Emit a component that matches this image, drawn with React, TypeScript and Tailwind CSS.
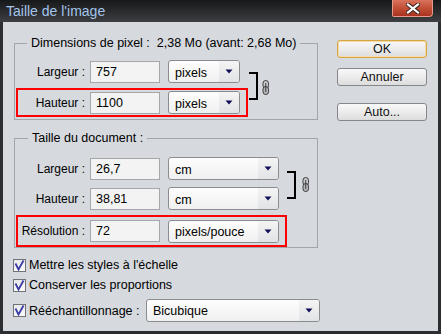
import React from "react";

function Arrow() {
  return (
    <svg width="8" height="5" viewBox="0 0 8 5">
      <path d="M0.5 0.5 H7.5 L4 4.5 Z" fill="#10105a" />
    </svg>
  );
}

function Select({ w, label }: { w: string; label: string }) {
  return (
    <div
      className={`${w} h-[23px] ml-[8px] flex items-stretch rounded-[3px] border border-[#8a8c8f] bg-gradient-to-b from-[#fdfdfd] to-[#f0f0f0] overflow-hidden`}
    >
      <div className="flex-1 flex items-center pl-[6px] text-[12.5px] leading-[16px] pt-[2px]">{label}</div>
      <div className="w-[20px] flex items-center justify-center bg-gradient-to-b from-[#f4f4f4] to-[#e2e3e5]">
        <Arrow />
      </div>
    </div>
  );
}

function Input({ value }: { value: string }) {
  return (
    <div className="w-[70px] h-[22px] ml-[5px] border border-[#a4a6a9] bg-[#f3f3f3] flex items-center pl-[5px] text-[12.5px] leading-[16px]">
      {value}
    </div>
  );
}

function Row({
  label,
  value,
  unit,
  red,
  w,
  h,
  sw,
}: {
  label: string;
  value: string;
  unit: string;
  red?: boolean;
  w: string;
  h: string;
  sw: string;
}) {
  return (
    <div
      className={`${w} ${h} border-2 ${red ? "border-[#ff0000]" : "border-transparent"} flex items-center`}
    >
      <div className="w-[67px] text-right text-[12px] leading-[16px] whitespace-nowrap">{label}</div>
      <Input value={value} />
      <Select w={sw} label={unit} />
    </div>
  );
}

function Link() {
  return (
    <svg width="8" height="15" viewBox="0 0 8 15">
      <rect x="1" y="0.5" width="5.5" height="8" rx="2.75" fill="#c9cbce" stroke="#3a3a3a" strokeWidth="1" />
      <rect x="1" y="6.5" width="5.5" height="8" rx="2.75" fill="#b6b8bb" stroke="#3a3a3a" strokeWidth="1" />
      <line x1="3.75" y1="3" x2="3.75" y2="12" stroke="#3a3a3a" strokeWidth="1" />
    </svg>
  );
}

function Check() {
  return (
    <div className="w-[13px] h-[13px] border border-[#707276] bg-gradient-to-b from-[#e9eaec] to-[#fafafa] flex items-center justify-center">
      <svg width="11" height="11" viewBox="0 0 11 11">
        <path d="M1.5 3.5 L4.5 9.5 L9.5 0.5" fill="none" stroke="#3b3ba6" strokeWidth="1.8" />
      </svg>
    </div>
  );
}

function Button({ label, def }: { label: string; def?: boolean }) {
  return (
    <div
      className={`w-[90px] h-[18px] rounded-[3px] border ${
        def ? "border-[#d8a546] shadow-[inset_0_0_0_1px_#f5dca6]" : "border-[#85878a]"
      } bg-gradient-to-b from-[#f8f8f8] via-[#ececec] to-[#dcdcdc] flex items-center justify-center text-[12.5px] leading-[14px] text-[#111]`}
    >
      {label}
    </div>
  );
}

export default function App() {
  return (
    <div className="w-[441px] h-[334px] bg-[#2b2d30] flex flex-col font-['Liberation_Sans',Arial,sans-serif] text-black">
      <div className="h-[22px] flex items-start bg-gradient-to-b from-[#17181a] to-[#3d3f42]">
        <span className="pl-[6px] text-[14px] leading-[22px] text-[#a3c5ea]">Taille de l'image</span>
        <div className="flex-1" />
        <div className="mr-[8px] w-[41px] h-[17px] rounded-br-[4px] rounded-bl-[2px] border border-[#e69a8a] border-t-0 bg-gradient-to-b from-[#d9735c] via-[#c24f38] to-[#a9321f] flex items-center justify-center">
          <svg width="14" height="11" viewBox="0 0 14 11">
            <path d="M2 1.5 L12 9.5 M12 1.5 L2 9.5" stroke="#3a2520" strokeWidth="4.2" strokeLinecap="square" />
            <path d="M2 1.5 L12 9.5 M12 1.5 L2 9.5" stroke="#ffffff" strokeWidth="2.2" strokeLinecap="square" />
          </svg>
        </div>
      </div>
      <div className="mx-[3px] mb-[3px] flex-1 bg-[#d6d9de] pl-[11px] pt-[13px] flex flex-col">
        <div className="flex gap-[19px]">
          <div className="w-[304px] flex flex-col gap-[10px]">
            <fieldset className="border border-[#a2a6ab] pb-[2px]">
              <legend className="ml-[12px] px-[4px] text-[12.5px] leading-[16px] whitespace-nowrap">
                Dimensions de pixel :&nbsp; 2,38 Mo (avant: 2,68 Mo)
              </legend>
              <div className="flex pl-[1px] mt-[6px] items-start">
                <div className="flex flex-col gap-[2px]">
                  <Row label="Largeur :" value="757" unit="pixels" w="w-[232px]" h="h-[29px]" sw="w-[72px]" />
                  <Row label="Hauteur :" value="1100" unit="pixels" red w="w-[232px]" h="h-[29px]" sw="w-[72px]" />
                </div>
                <div className="ml-[1px] mt-[15px] w-[9px] h-[28px] border-2 border-l-0 border-black" />
                <div className="ml-[4px] mt-[23px]">
                  <Link />
                </div>
              </div>
            </fieldset>
            <fieldset className="border border-[#a2a6ab]">
              <legend className="ml-[13px] px-[4px] text-[12.5px] leading-[16px] whitespace-nowrap">
                Taille du document :
              </legend>
              <div className="flex pl-[1px] mt-[8px] items-start">
                <div className="flex flex-col">
                  <Row label="Largeur :" value="26,7" unit="cm" w="w-[271px]" h="h-[29px]" sw="w-[111px]" />
                  <div className="mt-[1px]">
                    <Row label="Hauteur :" value="38,81" unit="cm" w="w-[271px]" h="h-[29px]" sw="w-[111px]" />
                  </div>
                  <div className="mt-[2px]">
                    <Row label="Résolution :" value="72" unit="pixels/pouce" red w="w-[271px]" h="h-[32px]" sw="w-[111px]" />
                  </div>
                </div>
                <div className="mt-[17px] w-[9px] h-[28px] border-2 border-l-0 border-black" />
                <div className="ml-[6px] mt-[23px]">
                  <Link />
                </div>
              </div>
            </fieldset>
          </div>
          <div className="flex flex-col mt-[5px] gap-[10px]">
            <Button label="OK" def />
            <Button label="Annuler" />
            <div className="mt-[7px]">
              <Button label="Auto..." />
            </div>
          </div>
        </div>
        <div className="mt-[7px] -ml-[1px] flex flex-col text-[12.5px] leading-[16px]">
          <div className="h-[20px] flex items-center gap-[3px]">
            <Check />
            <span>Mettre les styles à l'échelle</span>
          </div>
          <div className="h-[20px] flex items-center gap-[3px]">
            <Check />
            <span>Conserver les proportions</span>
          </div>
          <div className="h-[23px] mt-[4px] flex items-center">
            <Check />
            <span className="ml-[3px] w-[117px] whitespace-nowrap">Rééchantillonnage :</span>
            <div className="w-[174px] h-[23px] flex items-stretch rounded-[3px] border border-[#8a8c8f] bg-gradient-to-b from-[#fdfdfd] to-[#f0f0f0] overflow-hidden">
              <div className="flex-1 flex items-center pl-[6px] text-[12.5px] leading-[16px] pt-[1px]">Bicubique</div>
              <div className="w-[20px] flex items-center justify-center bg-gradient-to-b from-[#f4f4f4] to-[#e2e3e5]">
                <Arrow />
              </div>
            </div>
          </div>
        </div>
      </div>
    </div>
  );
}
